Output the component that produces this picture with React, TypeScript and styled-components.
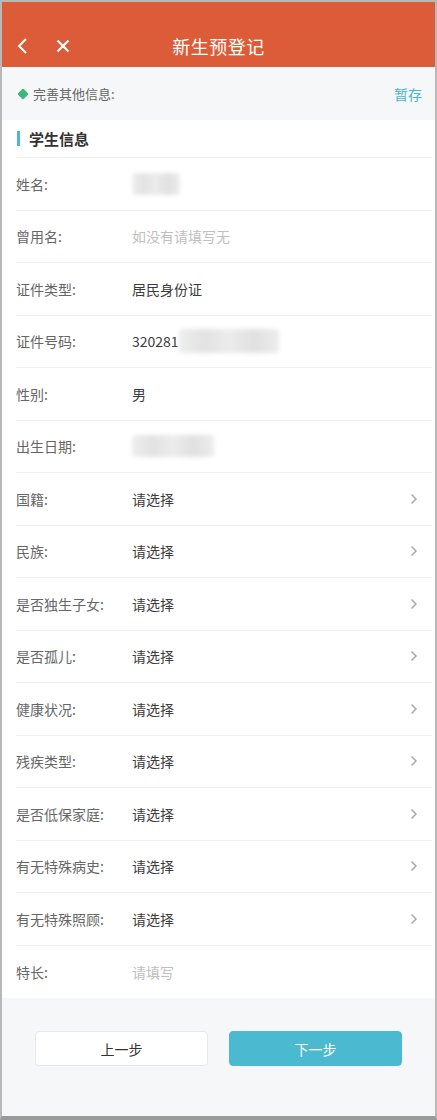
import styled, { createGlobalStyle } from "styled-components";

const GlobalStyle = createGlobalStyle`
  html, body {
    margin: 0;
    padding: 0;
    background: #fff;
  }
  * {
    box-sizing: border-box;
  }
  body {
    font-family: "Noto Sans CJK SC", "Noto Sans", "Liberation Sans", sans-serif;
  }
`;

const Frame = styled.div`
  width: 437px;
  height: 1120px;
  border-left: 2px solid #b8b8b8;
  border-right: 2px solid #b8b8b8;
  border-top: 2px solid #b8b8b8;
  border-bottom: 4px solid #9a9a9a;
  background: #f6f7f9;
  display: flex;
  flex-direction: column;
  overflow: hidden;
`;

const Header = styled.div`
  background: #dc5b38;
  height: 65px;
  padding-top: 23px;
`;

const NavBar = styled.div`
  position: relative;
  height: 42px;
  display: flex;
  align-items: center;
  justify-content: center;
`;

const NavIcons = styled.div`
  position: absolute;
  left: 14px;
  top: 0;
  bottom: 0;
  display: flex;
  align-items: center;
  gap: 26px;
`;

const Title = styled.h1`
  margin: 0;
  font-size: 18px;
  font-weight: 400;
  color: #fff;
  letter-spacing: 0.5px;
`;

const InfoBar = styled.div`
  height: 53px;
  display: flex;
  align-items: center;
  justify-content: space-between;
  padding: 0 13px 0 16px;
`;

const InfoLabel = styled.div`
  display: flex;
  align-items: center;
  gap: 6px;
  font-size: 13px;
  color: #666;
`;

const Diamond = styled.span`
  width: 8px;
  height: 8px;
  background: #3cb878;
  transform: rotate(45deg);
  border-radius: 1px;
  margin-left: 1px;
`;

const SaveLink = styled.span`
  font-size: 14px;
  color: #4ab3cf;
`;

const Card = styled.div`
  background: #fff;
  padding: 0 3px 0 14px;
`;

const SectionTitle = styled.div`
  height: 38px;
  display: flex;
  align-items: center;
  gap: 9px;
  font-size: 15px;
  font-weight: 700;
  color: #333;
  border-bottom: 1px solid #f0f0f0;
`;

const SectionBar = styled.span`
  width: 3px;
  height: 15px;
  background: #4bbad0;
  margin-left: 1px;
`;

const Row = styled.div<{ $last?: boolean }>`
  height: 52.5px;
  display: flex;
  align-items: center;
  padding-right: 14px;
  border-bottom: ${({ $last }) => ($last ? "none" : "1px solid #f0f0f0")};
`;

const Label = styled.div`
  width: 116px;
  font-size: 14px;
  color: #666;
  flex-shrink: 0;
`;

const Value = styled.div<{ $placeholder?: boolean }>`
  flex: 1;
  display: flex;
  align-items: center;
  font-size: 14px;
  color: ${({ $placeholder }) => ($placeholder ? "#c0c0c0" : "#3c3c3c")};
`;

const Blur = styled.span<{ $w: number; $h: number }>`
  display: inline-block;
  width: ${({ $w }) => $w}px;
  height: ${({ $h }) => $h}px;
  background: linear-gradient(
    90deg,
    #eeeeee 0%,
    #e2e2e2 25%,
    #ececec 50%,
    #e0e0e0 75%,
    #ededed 100%
  );
  filter: blur(2px);
  border-radius: 4px;
`;

const Footer = styled.div`
  flex: 1;
  display: flex;
  justify-content: center;
  gap: 21px;
  padding-top: 33px;
`;

const Button = styled.button<{ $primary?: boolean }>`
  width: 173px;
  height: 35px;
  border-radius: 4px;
  font-family: inherit;
  font-size: 14px;
  border: 1px solid ${({ $primary }) => ($primary ? "#4bbad0" : "#e8e8e8")};
  background: ${({ $primary }) => ($primary ? "#4bbad0" : "#fff")};
  color: ${({ $primary }) => ($primary ? "#fff" : "#333")};
`;

const Chevron = () => (
  <svg width="8" height="12" viewBox="0 0 8 12">
    <path d="M1.5 1.5 L6 6 L1.5 10.5" fill="none" stroke="#aaa" strokeWidth="1.5" />
  </svg>
);

type Field = {
  label: string;
  value?: string;
  placeholder?: boolean;
  select?: boolean;
  blur?: [number, number];
};

const fields: Field[] = [
  { label: "姓名:", blur: [48, 22] },
  { label: "曾用名:", value: "如没有请填写无", placeholder: true },
  { label: "证件类型:", value: "居民身份证" },
  { label: "证件号码:", value: "320281", blur: [100, 24] },
  { label: "性别:", value: "男" },
  { label: "出生日期:", blur: [82, 22] },
  { label: "国籍:", value: "请选择", select: true },
  { label: "民族:", value: "请选择", select: true },
  { label: "是否独生子女:", value: "请选择", select: true },
  { label: "是否孤儿:", value: "请选择", select: true },
  { label: "健康状况:", value: "请选择", select: true },
  { label: "残疾类型:", value: "请选择", select: true },
  { label: "是否低保家庭:", value: "请选择", select: true },
  { label: "有无特殊病史:", value: "请选择", select: true },
  { label: "有无特殊照顾:", value: "请选择", select: true },
  { label: "特长:", value: "请填写", placeholder: true },
];

export default function App() {
  return (
    <>
      <GlobalStyle />
      <Frame>
        <Header>
          <NavBar>
            <NavIcons>
              <svg width="14" height="18" viewBox="0 0 14 18">
                <path d="M10 2 L3 9 L10 16" fill="none" stroke="#fff" strokeWidth="2" />
              </svg>
              <svg width="14" height="14" viewBox="0 0 14 14">
                <path d="M1.5 1.5 L12.5 12.5 M12.5 1.5 L1.5 12.5" stroke="#fff" strokeWidth="2.2" />
              </svg>
            </NavIcons>
            <Title>新生预登记</Title>
          </NavBar>
        </Header>
        <InfoBar>
          <InfoLabel>
            <Diamond />
            完善其他信息:
          </InfoLabel>
          <SaveLink>暂存</SaveLink>
        </InfoBar>
        <Card>
          <SectionTitle>
            <SectionBar />
            学生信息
          </SectionTitle>
          {fields.map((f, i) => (
            <Row key={f.label} $last={i === fields.length - 1}>
              <Label>{f.label}</Label>
              <Value $placeholder={f.placeholder}>
                {f.value}
                {f.blur && <Blur $w={f.blur[0]} $h={f.blur[1]} />}
              </Value>
              {f.select && <Chevron />}
            </Row>
          ))}
        </Card>
        <Footer>
          <Button>上一步</Button>
          <Button $primary>下一步</Button>
        </Footer>
      </Frame>
    </>
  );
}
